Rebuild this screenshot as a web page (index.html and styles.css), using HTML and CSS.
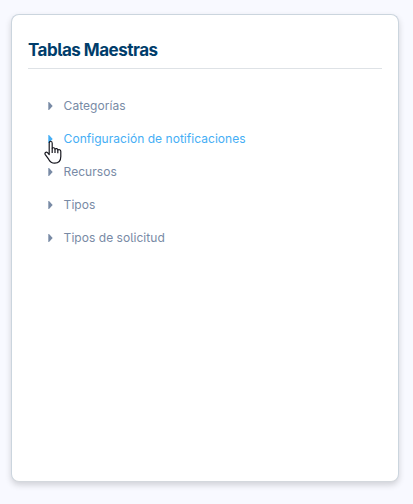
FILE: index.html
```html
<!DOCTYPE html>
<html lang="es">
<head>
<meta charset="utf-8">
<title>Tablas Maestras</title>
<link rel="stylesheet" href="styles.css">
</head>
<body>
<main class="card">
  <h1 class="title">Tablas Maestras</h1>
  <ul class="menu">
    <li class="item"><svg class="caret" viewBox="0 0 5 8"><path d="M.3 0H1L4.7 4 1 8H.3z"/></svg><span>Categorías</span></li>
    <li class="item active"><svg class="caret" viewBox="0 0 5 8"><path d="M.3 0H1L4.7 4 1 8H.3z"/></svg><span>Configuración de notificaciones</span>
      <svg class="pointer" viewBox="0 0 18 24"><path d="M5.2 14.5V3.2C5.2.6 8.2.6 8.2 3.2V8.6C8.8 7.2 11 7.6 11 9.3 11.8 8 13.8 8.4 13.8 10.2 14.8 9.2 16.8 9.7 16.8 11.6V16.5C16.8 21 14.2 23.2 10.6 23.2 7.4 23.2 6 21.8 4.6 19.2L1.3 14.6C.2 12.8 2.2 11.4 3.5 12.7Z"/><path d="M8.2 8.6V13M11 9.3V13M13.8 10.2V13.2"/></svg></li>
    <li class="item"><svg class="caret" viewBox="0 0 5 8"><path d="M.3 0H1L4.7 4 1 8H.3z"/></svg><span>Recursos</span></li>
    <li class="item"><svg class="caret" viewBox="0 0 5 8"><path d="M.3 0H1L4.7 4 1 8H.3z"/></svg><span>Tipos</span></li>
    <li class="item"><svg class="caret" viewBox="0 0 5 8"><path d="M.3 0H1L4.7 4 1 8H.3z"/></svg><span>Tipos de solicitud</span></li>
  </ul>
</main>
</body>
</html>
```
FILE: styles.css
```css
* { box-sizing: border-box; }
body {
  margin: 0;
  height: 504px;
  padding: 14px 14px 22px 11px;
  background: #f8f9ff;
  font-family: Inter, "Liberation Sans", sans-serif;
  font-feature-settings: "cv05";
  overflow: hidden;
}
.card {
  height: 468px;
  padding: 20px 16px;
  background: #fff;
  border: 1px solid #cbd5de;
  border-bottom-color: #d4d8dd;
  border-radius: 8px;
  box-shadow: 0 3px 6px rgba(0, 0, 0, .16);
}
.title {
  margin: 0;
  height: 34px;
  border-bottom: 1px solid #dee2e6;
  color: #003d6b;
  font-size: 17px;
  font-weight: 700;
  line-height: 30px;
  letter-spacing: -.5px;
  white-space: nowrap;
}
.menu {
  list-style: none;
  margin: 20px 0 0;
  padding: 0 0 0 20px;
}
.item {
  position: relative;
  display: flex;
  align-items: center;
  gap: 10.6px;
  height: 33px;
  color: #788aa5;
  font-size: 12px;
  letter-spacing: .04px;
  white-space: nowrap;
}
.active { color: #45aef5; }
.caret { width: 5px; height: 8px; fill: currentColor; }
.pointer {
  position: absolute;
  left: -4px;
  top: 18px;
  width: 18px;
  height: 24px;
  z-index: 1;
  fill: #fff;
  stroke: #17171f;
  stroke-width: 1.2;
  stroke-linejoin: round;
}
```
